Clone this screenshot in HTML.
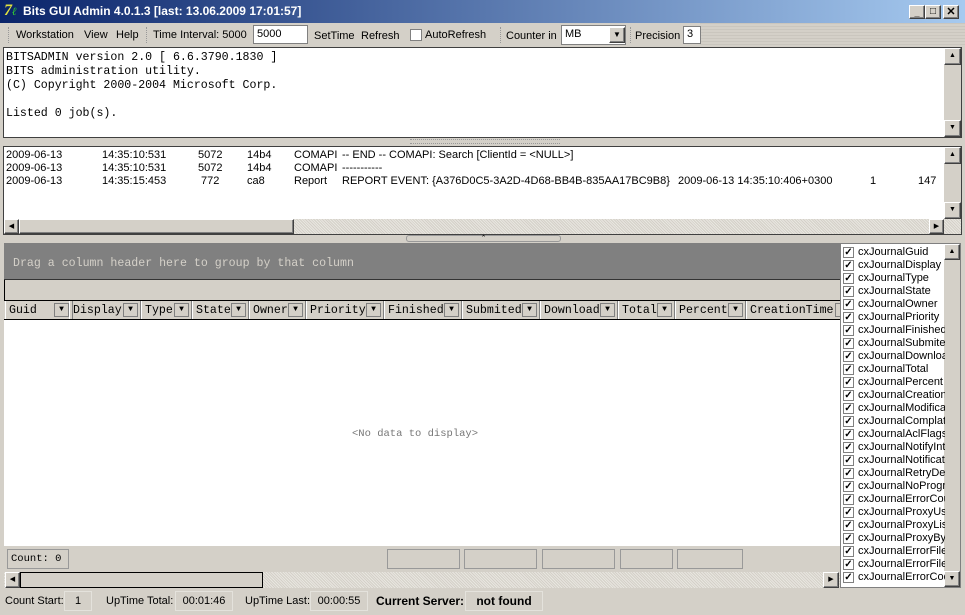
<!DOCTYPE html><html><head><style>
*{margin:0;padding:0;box-sizing:border-box}
body{width:965px;height:615px;background:#d4d0c8;font-family:"Liberation Sans",sans-serif;font-size:11px;position:relative;overflow:hidden;color:#000}
.a{position:absolute}
.mono{font-family:"Liberation Mono",monospace;font-size:11.6px}
.sunk{border:1px solid;border-color:#808080 #fff #fff #808080}
.btn{background:#d4d0c8;border:1px solid;border-color:#fff #404040 #404040 #fff;box-shadow:inset -1px -1px #808080}
.hatch{background:repeating-linear-gradient(45deg,#e8e6e0 0 1px,#d4d0c8 1px 2px)}
.sb{font-size:7px;text-align:center;line-height:13px}
.hc{position:absolute;top:0;height:19px;border-right:1px solid #808080;border-left:1px solid #fff;padding:3px 0 0 3px;font-family:"Liberation Mono",monospace;font-size:11.6px;white-space:nowrap;overflow:hidden}
.dd{position:absolute;top:2px;width:15px;height:14px;border:1px solid #808080;background:#d4d0c8;font-size:8px;text-align:center;line-height:12px}
.ck{position:absolute;left:843px;width:11px;height:11px;border:1px solid #808080;background:#fff;font-size:10px;line-height:9px;text-align:center;font-weight:bold}
.ci{position:absolute;left:858px;font-size:11px;white-space:nowrap;width:87px;overflow:hidden}
.log div{position:absolute;white-space:nowrap;font-size:11px}
</style></head><body>
<div class="a" style="left:0;top:0;width:965px;height:23px;background:linear-gradient(90deg,#0a246a,#a6caf0)"></div>
<div class="a" style="left:4px;top:3px;width:16px;height:16px;color:#e0e040;font:bold italic 16px 'Liberation Serif',serif;line-height:16px">7<span style="color:#3c3;font-size:11px">ℓ</span></div>
<div class="a" style="left:23px;top:4px;color:#fff;font-weight:bold;font-size:12px">Bits GUI Admin 4.0.1.3 [last: 13.06.2009 17:01:57]</div>
<div class="a btn" style="left:909px;top:5px;width:16px;height:14px;font-size:9px;text-align:center;font-weight:bold;line-height:14px">_</div>
<div class="a btn" style="left:925px;top:5px;width:16px;height:14px;font-size:10px;text-align:center;line-height:12px">□</div>
<div class="a btn" style="left:943px;top:5px;width:16px;height:14px;font-size:11px;text-align:center;font-weight:bold;line-height:12px">✕</div>
<div class="a" style="left:700px;top:23px;width:265px;height:24px;background:repeating-linear-gradient(0deg,#d4d0c8 0 2px,#cac6be 2px 3px)"></div>
<div class="a" style="left:16px;top:29px">Workstation</div>
<div class="a" style="left:84px;top:29px">View</div>
<div class="a" style="left:116px;top:29px">Help</div>
<div class="a" style="left:153px;top:29px">Time Interval: 5000</div>
<div class="a" style="left:253px;top:25px;width:55px;height:19px;background:#fff;border:1px solid #808080;padding:2px 3px">5000</div>
<div class="a" style="left:314px;top:30px">SetTime</div>
<div class="a" style="left:361px;top:30px">Refresh</div>
<div class="a" style="left:410px;top:29px;width:12px;height:12px;background:#fff;border:1px solid #808080"></div>
<div class="a" style="left:425px;top:29px">AutoRefresh</div>
<div class="a" style="left:506px;top:30px">Counter in</div>
<div class="a" style="left:561px;top:25px;width:65px;height:20px;background:#fff;border:1px solid #808080;padding:2px 3px">MB</div>
<div class="a btn" style="left:609px;top:27px;width:16px;height:16px;font-size:8px;text-align:center;line-height:14px">▼</div>
<div class="a" style="left:635px;top:30px">Precision</div>
<div class="a" style="left:683px;top:26px;width:18px;height:18px;background:#fff;border:1px solid #808080;padding:1px 3px">3</div>
<div class="a" style="left:8px;top:27px;width:3px;height:16px;border-left:1px dotted #999"></div>
<div class="a" style="left:146px;top:27px;width:3px;height:16px;border-left:1px dotted #999"></div>
<div class="a" style="left:500px;top:27px;width:3px;height:16px;border-left:1px dotted #999"></div>
<div class="a" style="left:630px;top:27px;width:3px;height:16px;border-left:1px dotted #999"></div>

<div class="a" style="left:3px;top:47px;width:959px;height:91px;background:#fff;border:1px solid #404040"></div>
<div class="a mono" style="left:6px;top:51px;line-height:14px;white-space:pre">BITSADMIN version 2.0 [ 6.6.3790.1830 ]
BITS administration utility.
(C) Copyright 2000-2004 Microsoft Corp.

Listed 0 job(s).</div>
<div class="a" style="left:944px;top:48px;width:17px;height:89px;background:#d4d0c8"></div>
<div class="a btn sb" style="left:944px;top:48px;width:17px;height:17px">▲</div>
<div class="a btn sb" style="left:944px;top:120px;width:17px;height:17px">▼</div>
<div class="a" style="left:410px;top:139px;width:150px;height:5px;border-top:1px dotted #999;border-bottom:1px dotted #999"></div>

<div class="a" style="left:3px;top:146px;width:959px;height:89px;background:#fff;border:1px solid #404040"></div>
<div class="a log">
<div style="left:6px;top:149px">2009-06-13</div><div style="left:102px;top:149px">14:35:10:531</div><div style="left:198px;top:149px">5072</div><div style="left:247px;top:149px">14b4</div><div style="left:294px;top:149px">COMAPI</div><div style="left:342px;top:149px">-- END -- COMAPI: Search [ClientId = &lt;NULL&gt;]</div>
<div style="left:6px;top:162px">2009-06-13</div><div style="left:102px;top:162px">14:35:10:531</div><div style="left:198px;top:162px">5072</div><div style="left:247px;top:162px">14b4</div><div style="left:294px;top:162px">COMAPI</div><div style="left:342px;top:162px">-----------</div>
<div style="left:6px;top:175px">2009-06-13</div><div style="left:102px;top:175px">14:35:15:453</div><div style="left:201px;top:175px">772</div><div style="left:247px;top:175px">ca8</div><div style="left:294px;top:175px">Report</div><div style="left:342px;top:175px">REPORT EVENT: {A376D0C5-3A2D-4D68-BB4B-835AA17BC9B8}</div><div style="left:678px;top:175px">2009-06-13 14:35:10:406+0300</div><div style="left:870px;top:175px">1</div><div style="left:918px;top:175px">147</div>
</div>
<div class="a" style="left:944px;top:147px;width:17px;height:72px;background:#d4d0c8"></div>
<div class="a btn sb" style="left:944px;top:147px;width:17px;height:17px">▲</div>
<div class="a btn sb" style="left:944px;top:202px;width:17px;height:17px">▼</div>
<div class="a hatch" style="left:4px;top:219px;width:957px;height:15px"></div>
<div class="a btn sb" style="left:4px;top:219px;width:15px;height:15px">◀</div>
<div class="a btn" style="left:19px;top:219px;width:275px;height:15px"></div>
<div class="a btn sb" style="left:929px;top:219px;width:15px;height:15px">▶</div>
<div class="a" style="left:406px;top:235px;width:155px;height:7px;border:1px solid #999;border-radius:3px;font-size:7px;text-align:center;line-height:5px">⌃</div>

<div class="a" style="left:4px;top:243px;width:836px;height:37px;background:#808080;border-bottom:1px solid #333"></div>
<div class="a mono" style="left:13px;top:257px;color:#d4d0c8">Drag a column header here to group by that column</div>
<div class="a" style="left:4px;top:280px;width:836px;height:20px;background:#d4d0c8;border-left:1px solid #000"></div>
<div class="a" style="left:4px;top:300px;width:836px;height:20px;background:#d4d0c8;border-top:1px solid #000;border-bottom:1px solid #000;overflow:hidden">
<div class="hc" style="left:1px;width:68px">Guid<div class="dd" style="left:48px">▼</div></div>
<div class="hc" style="left:65px;width:72px">Display<div class="dd" style="left:53px">▼</div></div>
<div class="hc" style="left:137px;width:51px">Type<div class="dd" style="left:32px">▼</div></div>
<div class="hc" style="left:188px;width:57px">State<div class="dd" style="left:38px">▼</div></div>
<div class="hc" style="left:245px;width:57px">Owner<div class="dd" style="left:38px">▼</div></div>
<div class="hc" style="left:302px;width:78px">Priority<div class="dd" style="left:59px">▼</div></div>
<div class="hc" style="left:380px;width:78px">Finished<div class="dd" style="left:59px">▼</div></div>
<div class="hc" style="left:458px;width:78px">Submited<div class="dd" style="left:59px">▼</div></div>
<div class="hc" style="left:536px;width:78px">Download<div class="dd" style="left:59px">▼</div></div>
<div class="hc" style="left:614px;width:57px">Total<div class="dd" style="left:38px">▼</div></div>
<div class="hc" style="left:671px;width:71px">Percent<div class="dd" style="left:52px">▼</div></div>
<div class="hc" style="left:742px;width:100px">CreationTime<div class="dd" style="left:88px">▼</div></div>
</div>
<div class="a" style="left:4px;top:320px;width:836px;height:226px;background:#fff"></div>
<div class="a mono" style="left:352px;top:428px;color:#777;font-size:10.5px">&lt;No data to display&gt;</div>
<div class="a" style="left:4px;top:546px;width:836px;height:26px;background:#d4d0c8"></div>
<div class="a mono" style="left:7px;top:549px;width:62px;height:20px;border:1px solid #999;padding:3px 3px;font-size:10.5px">Count: 0</div>
<div class="a" style="left:387px;top:549px;width:73px;height:20px;border:1px solid #999"></div>
<div class="a" style="left:464px;top:549px;width:73px;height:20px;border:1px solid #999"></div>
<div class="a" style="left:542px;top:549px;width:73px;height:20px;border:1px solid #999"></div>
<div class="a" style="left:620px;top:549px;width:53px;height:20px;border:1px solid #999"></div>
<div class="a" style="left:677px;top:549px;width:66px;height:20px;border:1px solid #999"></div>
<div class="a hatch" style="left:4px;top:572px;width:836px;height:16px"></div>
<div class="a btn sb" style="left:5px;top:572px;width:15px;height:16px">◀</div>
<div class="a" style="left:20px;top:572px;width:243px;height:16px;border:1px solid #000;background:#d4d0c8"></div>
<div class="a btn sb" style="left:823px;top:572px;width:16px;height:16px">▶</div>

<div class="a" style="left:840px;top:243px;width:121px;height:345px;background:#fff;border:1px solid #808080;overflow:hidden"></div>
<div class="a" style="left:944px;top:244px;width:16px;height:343px;background:#d4d0c8"></div>
<div class="a btn sb" style="left:944px;top:244px;width:16px;height:16px">▲</div>
<div class="a btn sb" style="left:944px;top:571px;width:16px;height:16px">▼</div>
<div id="cl"></div>
<script>
var n=["Guid","Display","Type","State","Owner","Priority","Finished","Submited","Download","Total","Percent","Creation","Modification","ComplationTime","AclFlags","NotifyInt","Notification","RetryDelay","NoProgress","ErrorCount","ProxyUsage","ProxyList","ProxyBypass","ErrorFile","ErrorFile2","ErrorCode","ErrorContext"],h="";
for(var i=0;i<n.length;i++){var y=246+i*13;if(y>578)break;h+='<div class="ck" style="top:'+(y+1)+'px">✓</div><div class="ci" style="top:'+y+'px">cxJournal'+n[i]+'</div>';}
document.getElementById("cl").innerHTML=h;
</script>
<div class="a" style="left:840px;top:588px;width:121px;height:2px;background:#d4d0c8"></div>

<div class="a" style="left:0;top:590px;width:965px;height:25px;background:#d4d0c8"></div>
<div class="a" style="left:5px;top:595px">Count Start:</div>
<div class="a" style="left:64px;top:591px;width:28px;height:20px;border:1px solid #e4e2dc;text-align:center;padding-top:3px">1</div>
<div class="a" style="left:106px;top:595px">UpTime Total:</div>
<div class="a" style="left:175px;top:591px;width:58px;height:20px;border:1px solid #e4e2dc;text-align:center;padding-top:3px">00:01:46</div>
<div class="a" style="left:245px;top:595px">UpTime Last:</div>
<div class="a" style="left:310px;top:591px;width:58px;height:20px;border:1px solid #e4e2dc;text-align:center;padding-top:3px">00:00:55</div>
<div class="a" style="left:376px;top:594px;font-weight:bold;font-size:12px">Current Server:</div>
<div class="a" style="left:465px;top:591px;width:78px;height:20px;border:1px solid #e4e2dc;text-align:center;padding-top:2px;font-weight:bold;font-size:12px">not found</div>
</body></html>
